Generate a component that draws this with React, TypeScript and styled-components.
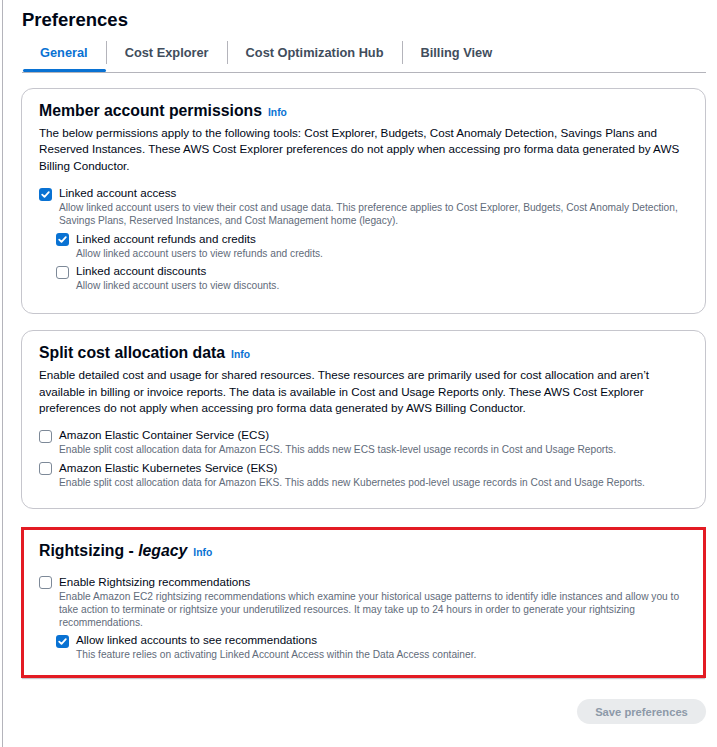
import { ReactNode } from 'react';
import styled, { createGlobalStyle } from 'styled-components';

const GlobalStyle = createGlobalStyle`
  html, body {
    margin: 0;
    padding: 0;
    background: #fff;
  }
  body {
    font-family: "Liberation Sans", Arial, sans-serif;
    color: #000716;
  }
`;

type Option = {
  label: string;
  description: string;
  checked: boolean;
  nested?: boolean;
};

const memberOptions: Option[] = [
  {
    label: 'Linked account access',
    description:
      'Allow linked account users to view their cost and usage data. This preference applies to Cost Explorer, Budgets, Cost Anomaly Detection, Savings Plans, Reserved Instances, and Cost Management home (legacy).',
    checked: true,
  },
  {
    label: 'Linked account refunds and credits',
    description: 'Allow linked account users to view refunds and credits.',
    checked: true,
    nested: true,
  },
  {
    label: 'Linked account discounts',
    description: 'Allow linked account users to view discounts.',
    checked: false,
    nested: true,
  },
];

const splitOptions: Option[] = [
  {
    label: 'Amazon Elastic Container Service (ECS)',
    description:
      'Enable split cost allocation data for Amazon ECS. This adds new ECS task-level usage records in Cost and Usage Reports.',
    checked: false,
  },
  {
    label: 'Amazon Elastic Kubernetes Service (EKS)',
    description:
      'Enable split cost allocation data for Amazon EKS. This adds new Kubernetes pod-level usage records in Cost and Usage Reports.',
    checked: false,
  },
];

const rightsizingOptions: Option[] = [
  {
    label: 'Enable Rightsizing recommendations',
    description:
      'Enable Amazon EC2 rightsizing recommendations which examine your historical usage patterns to identify idle instances and allow you to take action to terminate or rightsize your underutilized resources. It may take up to 24 hours in order to generate your rightsizing recommendations.',
    checked: false,
  },
  {
    label: 'Allow linked accounts to see recommendations',
    description: 'This feature relies on activating Linked Account Access within the Data Access container.',
    checked: true,
    nested: true,
  },
];

const tabs = ['General', 'Cost Explorer', 'Cost Optimization Hub', 'Billing View'];

function CheckBox({ checked }: { checked: boolean }) {
  return (
    <Box $checked={checked}>
      {checked && (
        <svg width="13" height="13" viewBox="0 0 13 13">
          <path d="M3.2 6.6 L5.5 8.9 L9.8 4.2" fill="none" stroke="#fff" strokeWidth="1.8" strokeLinecap="round" strokeLinejoin="round" />
        </svg>
      )}
    </Box>
  );
}

function OptionList({ options }: { options: Option[] }) {
  return (
    <Options>
      {options.map(o => (
        <OptionRow key={o.label} $nested={!!o.nested}>
          <CheckBox checked={o.checked} />
          <OptionText>
            <OptionLabel>{o.label}</OptionLabel>
            <OptionDesc>{o.description}</OptionDesc>
          </OptionText>
        </OptionRow>
      ))}
    </Options>
  );
}

function Section({
  title,
  children,
  highlighted,
  bottom,
}: {
  title: ReactNode;
  children: ReactNode;
  highlighted?: boolean;
  bottom: number;
}) {
  return (
    <Container $highlighted={!!highlighted} $bottom={bottom}>
      <SectionTitle>
        {title}
        <InfoLink>Info</InfoLink>
      </SectionTitle>
      {children}
    </Container>
  );
}

export default function App() {
  return (
    <Page>
      <GlobalStyle />
      <PageTitle>Preferences</PageTitle>
      <TabList>
        {tabs.map((t, i) => (
          <TabGroup key={t}>
            {i > 0 && <TabDivider />}
            <Tab $active={i === 0}>{t}</Tab>
          </TabGroup>
        ))}
      </TabList>

      <Stack>
        <Section title="Member account permissions" bottom={21}>
          <Paragraph>
            The below permissions apply to the following tools: Cost Explorer, Budgets, Cost Anomaly Detection, Savings
            Plans and Reserved Instances. These AWS Cost Explorer preferences do not apply when accessing pro forma data
            generated by AWS Billing Conductor.
          </Paragraph>
          <OptionList options={memberOptions} />
        </Section>

        <Section title="Split cost allocation data" bottom={19}>
          <Paragraph>
            Enable detailed cost and usage for shared resources. These resources are primarily used for cost allocation
            and aren’t available in billing or invoice reports. The data is available in Cost and Usage Reports only.
            These AWS Cost Explorer preferences do not apply when accessing pro forma data generated by AWS Billing
            Conductor.
          </Paragraph>
          <OptionList options={splitOptions} />
        </Section>

        <Section
          highlighted
          bottom={14}
          title={
            <>
              Rightsizing - <em>legacy</em>
            </>
          }
        >
          <OptionList options={rightsizingOptions} />
        </Section>
      </Stack>

      <Actions>
        <SaveButton disabled>Save preferences</SaveButton>
      </Actions>
    </Page>
  );
}

const Page = styled.div`
  margin-left: 2px;
  border-left: 1px solid #b4b4bb;
  padding: 8px 11px 22px 18px;
  min-height: 747px;
  box-sizing: border-box;
`;

const PageTitle = styled.h1`
  margin: 0 0 0 1px;
  font-size: 18.5px;
  line-height: 24px;
  font-weight: 700;
  color: #000716;
`;

const TabList = styled.div`
  display: flex;
  align-items: center;
  margin-left: 1px;
  border-bottom: 1px solid #b4b4bb;
`;

const TabGroup = styled.div`
  display: flex;
  align-items: center;
`;

const TabDivider = styled.span`
  width: 1px;
  height: 23px;
  margin-top: 1px;
  background: #b4b4bb;
`;

const Tab = styled.div<{ $active: boolean }>`
  position: relative;
  height: 40px;
  display: flex;
  align-items: center;
  padding: 0 18px;
  font-size: 12.8px;
  font-weight: 700;
  color: ${p => (p.$active ? '#0972d3' : '#414d5c')};

  &::after {
    content: '';
    display: ${p => (p.$active ? 'block' : 'none')};
    position: absolute;
    left: 1px;
    right: 0;
    bottom: 0;
    height: 3.5px;
    border-radius: 2px;
    background: #0972d3;
  }
`;

const Stack = styled.div`
  display: flex;
  flex-direction: column;
  gap: 16px;
  margin-top: 15px;
`;

const Container = styled.section<{ $highlighted: boolean; $bottom: number }>`
  border: ${p => (p.$highlighted ? '3px solid #e31b23' : '1px solid #c6c6cd')};
  border-radius: ${p => (p.$highlighted ? '0' : '12px')};
  padding: ${p => (p.$highlighted ? '11px 15px' : '12px 17px')} ${p => p.$bottom}px;
  margin-top: ${p => (p.$highlighted ? '2px' : '0')};
  box-shadow: ${p => (p.$highlighted ? '0 2px 1px -1px #c6c6cd' : 'none')};
`;

const SectionTitle = styled.h2`
  margin: 0 0 2px;
  font-size: 15.8px;
  line-height: 20px;
  font-weight: 700;
  color: #000716;

  em {
    font-style: italic;
  }
`;

const InfoLink = styled.span`
  margin-left: 6px;
  font-size: 10.3px;
  font-weight: 700;
  color: #0972d3;
`;

const Paragraph = styled.p`
  margin: 0;
  font-size: 11.65px;
  line-height: 16.4px;
  color: #000716;
`;

const Options = styled.div`
  display: flex;
  flex-direction: column;
  gap: 3.5px;
  margin-top: 11px;
`;

const OptionRow = styled.div<{ $nested: boolean }>`
  display: grid;
  grid-template-columns: 13px 1fr;
  column-gap: 7px;
  margin-left: ${p => (p.$nested ? '17px' : '0')};
`;

const Box = styled.span<{ $checked: boolean }>`
  width: 13px;
  height: 13px;
  margin-top: 2.5px;
  box-sizing: border-box;
  border-radius: 3px;
  border: ${p => (p.$checked ? 'none' : '1.5px solid #7d8998')};
  background: ${p => (p.$checked ? '#0972d3' : '#fff')};
  display: flex;
  align-items: center;
  justify-content: center;

  svg {
    display: block;
  }
`;

const OptionText = styled.div`
  display: flex;
  flex-direction: column;
`;

const OptionLabel = styled.span`
  font-size: 11.6px;
  line-height: 16px;
  color: #000716;
`;

const OptionDesc = styled.span`
  font-size: 10.2px;
  line-height: 13px;
  color: #5f6b7a;
`;

const Actions = styled.div`
  display: flex;
  justify-content: flex-end;
  margin-top: 21px;
`;

const SaveButton = styled.button`
  width: 129px;
  height: 25px;
  border: 0;
  border-radius: 13px;
  background: #e9ebed;
  color: #8d99a8;
  font-family: "Liberation Sans", Arial, sans-serif;
  font-size: 11.2px;
  font-weight: 700;
  padding: 0;
`;
